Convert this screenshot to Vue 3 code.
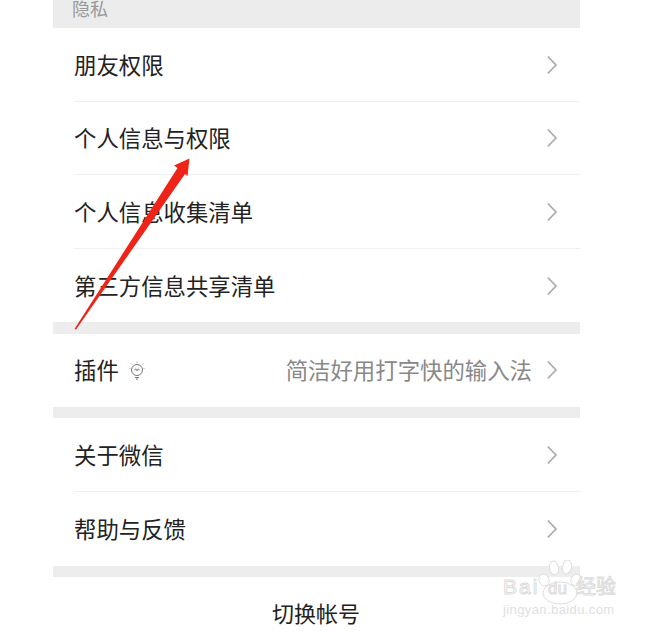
<script setup>
const groups = [
  [
    { label: '朋友权限' },
    { label: '个人信息与权限' },
    { label: '个人信息收集清单' },
    { label: '第三方信息共享清单' },
  ],
  [{ label: '插件', bulb: true, value: '简洁好用打字快的输入法' }],
  [{ label: '关于微信' }, { label: '帮助与反馈' }],
]
</script>

<template>
  <div class="page">
    <main class="panel">
      <div class="section-title">隐私</div>
      <template v-for="(group, g) in groups" :key="g">
        <div v-if="g > 0" class="spacer"></div>
        <div class="group">
          <div v-for="item in group" :key="item.label" class="row">
            <div class="row-inner">
              <span class="label">{{ item.label }}</span>
              <svg v-if="item.bulb" class="bulb" width="18" height="20" viewBox="0 0 18 20" fill="none" stroke="#777" stroke-width="1">
                <circle cx="9" cy="10" r="5.5" />
                <path d="M6.3 10.4l1.4-1.6 1.3 2 1.3-2 1.4 1.6" />
                <path d="M7 17.5h4M8 19h2" />
                <path d="M9 1.5v1.5M3 3.5l1 1M15 3.5l-1 1M1.5 8.5h1M15.5 8.5h1" stroke="#aaa" />
              </svg>
              <span v-if="item.value" class="value">{{ item.value }}</span>
              <svg class="chevron" width="12" height="20" viewBox="0 0 12 20" fill="none">
                <path d="M1.8 1.5L10 10L1.8 18.5" stroke="#aaa" stroke-width="1.7" />
              </svg>
            </div>
          </div>
        </div>
      </template>
      <div class="spacer"></div>
      <div class="switch">切换帐号</div>
    </main>

    <svg class="arrow" width="656" height="631" viewBox="0 0 656 631">
      <path d="M74.5 329L76 329.5L185 174L187.5 176L189.5 158.5L174 165.5L177.5 168Z" fill="#ee2418" />
    </svg>

    <div class="watermark">
      <svg class="wm-paw" width="62" height="50" viewBox="0 0 62 50" fill="#fff" stroke="#dedede">
        <ellipse cx="10" cy="20" rx="5" ry="6" transform="rotate(-25 10 20)" />
        <ellipse cx="20" cy="8" rx="4.5" ry="7" transform="rotate(-10 20 8)" />
        <ellipse cx="33" cy="7" rx="4.5" ry="7" transform="rotate(10 33 7)" />
        <ellipse cx="42" cy="20" rx="5" ry="6" transform="rotate(25 42 20)" />
        <ellipse cx="26" cy="33" rx="17" ry="11" />
      </svg>
      <div class="wm-top">
        <span class="wm-bai">Bai</span>
        <span class="wm-du">du</span>
        <span class="wm-jy">经验</span>
      </div>
      <div class="wm-url">jingyan.baidu.com</div>
    </div>
  </div>
</template>

<style scoped>
.page {
  position: relative;
  width: 656px;
  height: 631px;
  overflow: hidden;
  background: #fff;
  font-family: "Noto Sans CJK SC", "Liberation Sans", sans-serif;
}
.panel {
  width: 527px;
  margin-left: 53px;
}
.section-title {
  height: 28px;
  padding-left: 19px;
  background: #ececec;
  color: #999;
  font-size: 18px;
  line-height: 16px;
}
.spacer {
  height: 11.2px;
  background: #ededed;
}
.row {
  padding-left: 21px;
}
.row-inner {
  display: flex;
  align-items: center;
  height: 73.6px;
  padding-right: 22px;
  box-shadow: inset 0 -1px 0 #f0f0f0;
  box-sizing: border-box;
}
.row:last-child .row-inner {
  box-shadow: none;
}
.label {
  margin-bottom: 2px;
  color: #222;
  font-size: 22.4px;
  line-height: 30px;
}
.bulb {
  margin-left: 9px;
}
.value {
  margin-left: auto;
  margin-right: 14px;
  margin-bottom: 2px;
  color: #888;
  font-size: 22.4px;
  line-height: 30px;
}
.chevron {
  margin-left: auto;
}
.value + .chevron {
  margin-left: 0;
}
.switch {
  margin-top: 19px;
  color: #222;
  font-size: 22px;
  line-height: 32px;
  text-align: center;
  padding-right: 1px;
}
.arrow {
  position: absolute;
  left: 0;
  top: 0;
  pointer-events: none;
}
.watermark {
  position: absolute;
  left: 503px;
  top: 574px;
  width: 118px;
  color: #fff;
  font-family: "Liberation Sans", "Noto Sans CJK SC", sans-serif;
}
.wm-top {
  position: relative;
  display: flex;
  align-items: baseline;
  height: 26px;
  -webkit-text-stroke: 1px #dcdcdc;
}
.wm-bai {
  width: 45px;
  font-size: 21px;
  letter-spacing: 2px;
  line-height: 26px;
}
.wm-du {
  width: 28px;
  font-size: 17px;
  line-height: 26px;
}
.wm-jy {
  font-size: 20px;
  line-height: 26px;
}
.wm-url {
  margin-top: 3px;
  color: #e0e0e0;
  font-size: 13px;
  letter-spacing: 0.4px;
  line-height: 14px;
}
.wm-paw {
  position: absolute;
  left: 31px;
  top: -14px;
}
</style>
